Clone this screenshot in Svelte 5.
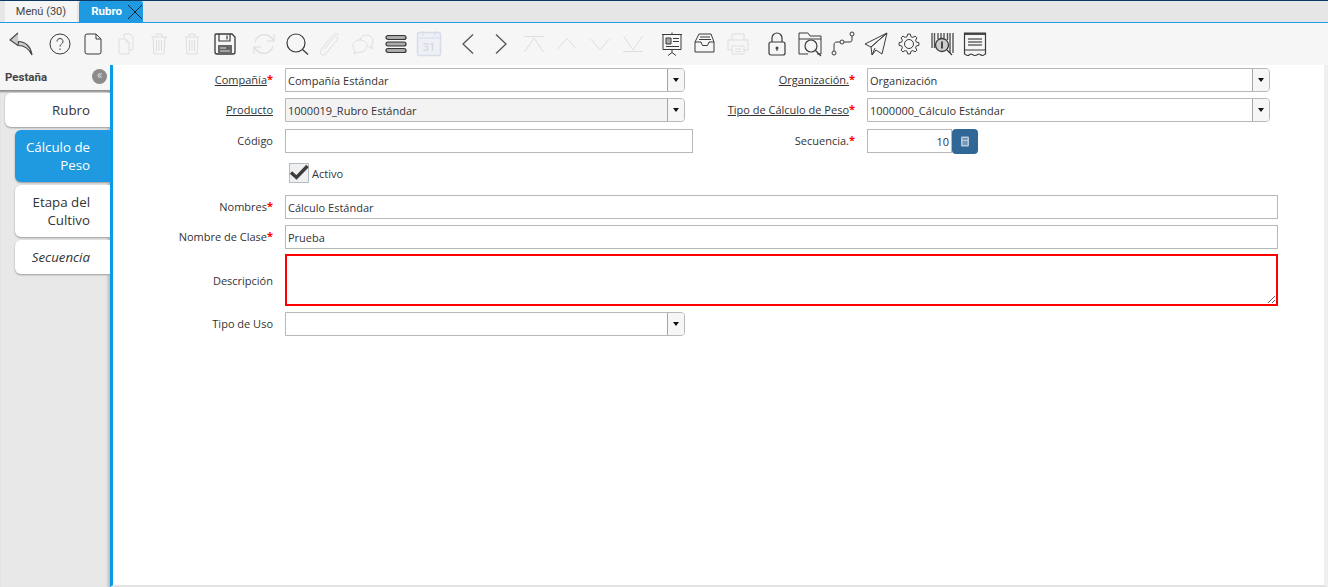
<script>
  let tabs = [
    { name: "Rubro", cls: "first" },
    { name: "Cálculo de Peso", cls: "active" },
    { name: "Etapa del Cultivo", cls: "" },
    { name: "Secuencia", cls: "ital" }
  ];

  // 8 tooth gear outline for the settings button
  function gearPath() {
    let d = "";
    for (let i = 0; i < 8; i++) {
      let a = (i * Math.PI) / 4;
      let pts = [[-0.26, 7.6], [-0.13, 10], [0.13, 10], [0.26, 7.6]];
      for (let [o, r] of pts) {
        let x = 15 + r * Math.cos(a + o);
        let y = 15 + r * Math.sin(a + o);
        d += (d ? "L" : "M") + x.toFixed(2) + " " + y.toFixed(2);
      }
    }
    return d + "z";
  }
</script>

<div class="page">
  <div class="tabstrip">
    <div class="wintab">Menú (30)</div>
    <div class="wintab current">
      Rubro
      <svg width="16" height="16" viewBox="0 0 16 16"><path d="M1 1l14 14M15 1L1 15" stroke="#123" stroke-width="1" fill="none"/></svg>
    </div>
  </div>

  <div class="toolbar">
    <div class="group">
      <button class="tool"><svg viewBox="0 0 30 30"><path d="M12 4L4 11l8 5.500.5-4C19.500 12.500 25 18 26 26c-3-6-7.500-9.500-13.500-9.500" fill="#ccc" stroke="#444" stroke-width="1.100"/></svg></button>
    </div>
    <div class="group">
      <button class="tool"><svg viewBox="0 0 30 30"><circle cx="15" cy="15" r="10"/><path d="M12 12.500c0-4 6-4 6 0 0 2.500-3 2.500-3 5M15 19.500v1.500"/></svg></button>
      <button class="tool"><svg viewBox="0 0 30 30"><path d="M9 5h9l5 5v13a2 2 0 0 1-2 2H9a2 2 0 0 1-2-2V7a2 2 0 0 1 2-2zM18 5v5h5"/></svg></button>
      <button class="tool off"><svg viewBox="0 0 30 30"><path d="M13 5h6l3 3v13h-4M13 5v4"/><path d="M9 10h6l3 3v12H9a1 1 0 0 1-1-1V11a1 1 0 0 1 1-1zM15 10v3h3"/></svg></button>
      <button class="tool off"><svg viewBox="0 0 30 30"><path d="M7 8h16M12 8V5h6v3M9 8l1 17h10l1-17M12.500 11v11M15 11v11M17.500 11v11"/></svg></button>
      <button class="tool off"><svg viewBox="0 0 30 30"><path d="M8 8h14M12 8V5h6v3M9 8l1 17h10l1-17M12.500 11v11M15 11v11M17.500 11v11"/></svg></button>
      <button class="tool"><svg viewBox="0 0 30 30"><path d="M6 5h16l3 3v15a2 2 0 0 1-2 2H7a2 2 0 0 1-2-2V6a1 1 0 0 1 1-1z" stroke-width="1.300"/><path d="M9 5v7h11V5M17 6.500v4" stroke-width="1.200"/><path d="M8 16h14v9H8z" fill="#666" stroke="none"/><path d="M10 19h6M10 22h10" stroke="#ddd"/></svg></button>
    </div>
    <div class="group">
      <button class="tool off"><svg viewBox="0 0 30 30"><path d="M6 13a9.500 9.500 0 0 1 16.500-4l2.500 3M25 5v7h-7M24 17a9.500 9.500 0 0 1-16.500 4L5 18M5 25v-7h7" stroke-width="1.200"/></svg></button>
      <button class="tool"><svg viewBox="0 0 30 30"><circle cx="14" cy="14" r="9" stroke-width="1.200"/><path d="M20.500 20.500L26 25.500" stroke-width="1.300"/></svg></button>
      <button class="tool off"><svg viewBox="0 0 30 30"><path d="M24 6c-2-2-4.500-2-6 0L6.500 20c-2 2.500-1.500 4.500 0 5.500s3.500.5 5-1.500L22 11c1-1.500 1-2.500 0-3.500s-2.500-.5-3.500 1L9.500 20"/></svg></button>
      <button class="tool off"><svg viewBox="0 0 30 30"><path d="M12 11c-4 0-7 2.700-7 6 0 1.700.7 3.200 2 4.200L6 25l4.500-2c.5.100 1 .200 1.500.200 4 0 7-2.800 7-6.200s-3-6-7-6z"/><path d="M12 11c.3-3 3.200-5 6.500-5 3.800 0 6.500 2.700 6.500 6 0 1.500-.5 2.800-1.500 3.800l1 3.700-4-1.700"/></svg></button>
      <button class="tool"><svg viewBox="0 0 30 30"><rect x="5" y="6.500" width="20" height="4" rx="2" fill="#aaa" stroke="#333" stroke-width="1.200"/><rect x="5" y="13" width="20" height="4" rx="2" fill="#aaa" stroke="#333" stroke-width="1.200"/><rect x="5" y="19.500" width="20" height="4" rx="2" fill="#aaa" stroke="#333" stroke-width="1.200"/></svg></button>
      <button class="tool cal"><svg viewBox="0 0 30 30"><rect x="3.500" y="3.500" width="23" height="23" rx="2" fill="#eef0f5" stroke="#d5dcea" stroke-width="1.500"/><path d="M4 9h22M9 2v5M21 2v5" stroke="#d5dcea"/><text x="15" y="22" text-anchor="middle" class="calnum">31</text></svg></button>
    </div>
    <div class="group">
      <button class="tool dim"><svg viewBox="0 0 30 30"><path d="M20 5.500L10 15l10 9.500" stroke-width="1.300"/></svg></button>
      <button class="tool dim"><svg viewBox="0 0 30 30"><path d="M10 5.500L20 15l-10 9.500" stroke-width="1.300"/></svg></button>
      <button class="tool off"><svg viewBox="0 0 30 30"><path d="M5 7.500h20M5.500 23L15 9l9.500 14"/></svg></button>
      <button class="tool off"><svg viewBox="0 0 30 30"><path d="M5.500 20L15 9.500 24.500 20"/></svg></button>
      <button class="tool off"><svg viewBox="0 0 30 30"><path d="M5.500 10L15 20.500 24.500 10"/></svg></button>
      <button class="tool off"><svg viewBox="0 0 30 30"><path d="M5 22.500h20M5.500 7L15 21l9.500-14"/></svg></button>
    </div>
    <div class="group">
      <button class="tool"><svg viewBox="0 0 30 30"><path d="M5 5.500h20M6 5.500v15h18v-15M15 3.500v2M15 20.500v3M15 23.500l-4 3M15 23.500l4 3"/><path d="M9 9h5v6H9z" fill="#aaa"/><path d="M16 9.500h6M16 12.500h6M9 17.500h13"/></svg></button>
      <button class="tool"><svg viewBox="0 0 30 30"><path d="M9 5h12l3 8v10H5V13zM5 13h6l1.500 3.500h5L19 13h5M10 8h10M9 10.500h12"/></svg></button>
      <button class="tool off"><svg viewBox="0 0 30 30"><path d="M9 11V5h12v6M9 21H5V11h20v10h-4M9 17h12v8H9zM12 20h6M12 22.500h6"/></svg></button>
    </div>
    <div class="group">
      <button class="tool"><svg viewBox="0 0 30 30"><path d="M10 13V9a5 5 0 0 1 10 0v4" stroke-width="1.200"/><rect x="7" y="13" width="16" height="13" rx="2" stroke-width="1.200"/><circle cx="15" cy="19" r="1.500" fill="#444" stroke="none"/><path d="M15 20v2"/></svg></button>
      <button class="tool"><svg viewBox="0 0 30 30"><path d="M4 10V4h9l2 3h11v18h-4M4 10v15h9M4 10h22"/><circle cx="16" cy="17" r="6" stroke-width="1.200"/><path d="M20.500 21.500L26 27" stroke-width="1.200"/></svg></button>
      <button class="tool"><svg viewBox="0 0 30 30"><circle cx="6" cy="24" r="2"/><circle cx="14" cy="13" r="2"/><circle cx="24" cy="5" r="2"/><path d="M6 22v-6c0-2 1-3 3-3h3M16 13h6c1.500 0 2-1 2-2V7"/></svg></button>
      <button class="tool"><svg viewBox="0 0 30 30"><path d="M26 4L4 15l6 3zM26 4L10 18l1 8 4-5 6 4zM11 26l3-7"/></svg></button>
      <button class="tool"><svg viewBox="0 0 30 30"><path d={gearPath()} stroke-linejoin="round"/><circle cx="15" cy="15" r="4.500"/></svg></button>
      <button class="tool"><svg viewBox="0 0 30 30"><path d="M5 4v15M7.500 4v15M11 4v6M14 4v5M17 4v5M20.500 4v7M23 4v20M26 4v20" stroke-width="1.400" stroke="#555"/><circle cx="15" cy="16" r="6.500" fill="#ccc" stroke-width="1.300"/><path d="M15 12.500v7" stroke-width="1.800"/><path d="M20 21l5 5" stroke-width="1.300"/></svg></button>
      <button class="tool"><svg viewBox="0 0 30 30"><path d="M4.500 4h21v21c-1 0-1.500 1.500-3 1.500S20 25 19 25s-2 1.500-4 1.500-3-1.500-4-1.500-2 1.500-3.500 1.500S5.500 25 4.500 25z" stroke-width="1.200"/><path d="M4.500 5h21" stroke-width="1.800"/><path d="M8 10h14M8 13h14M8 16h14" stroke-width="1.500" stroke="#666"/><path d="M4.500 21h21"/></svg></button>
    </div>
  </div>

  <div class="body">
    <aside class="side">
      <div class="sidehead">
        <span>Pestaña</span>
        <span class="collapse">«</span>
      </div>
      <div class="sidetabs">
        {#each tabs as t}
          <div class="stab {t.cls}">{t.name}</div>
        {/each}
      </div>
    </aside>

    <main class="main">
      <div class="form">
        <label class="lbl"><u>Compañía</u><b>*</b></label>
        <div class="combo"><input value="Compañía Estándar" readonly /><span class="drop"><i></i></span></div>
        <label class="lbl"><u>Organización.</u><b>*</b></label>
        <div class="combo right"><input value="Organización" readonly /><span class="drop"><i></i></span></div>

        <label class="lbl"><u>Producto</u></label>
        <div class="combo grey"><input value="1000019_Rubro Estándar" readonly /><span class="drop"><i></i></span></div>
        <label class="lbl"><u>Tipo de Cálculo de Peso</u><b>*</b></label>
        <div class="combo right"><input value="1000000_Cálculo Estándar" readonly /><span class="drop"><i></i></span></div>

        <label class="lbl">Código</label>
        <input class="field code" />
        <label class="lbl">Secuencia.<b>*</b></label>
        <div class="number">
          <input class="field num" value="10" readonly />
          <span class="calc"><svg width="10" height="11" viewBox="0 0 10 11"><rect x="1" y="0.500" width="8" height="10" rx="1" fill="#b9c9d8"/><path d="M2.500 3h5M2.500 6h5M2.500 8h5" stroke="#2f6797"/></svg></span>
        </div>

        <span></span>
        <div class="check wide">
          <span class="box"><svg width="20" height="20" viewBox="0 0 20 20"><path d="M2 9.500l5.500 5L18.500 3" fill="none" stroke="#3c3c3c" stroke-width="3.400"/></svg></span>
          <span>Activo</span>
        </div>

        <label class="lbl">Nombres<b>*</b></label>
        <input class="field wide" value="Cálculo Estándar" readonly />

        <label class="lbl">Nombre de Clase<b>*</b></label>
        <input class="field wide" value="Prueba" readonly />

        <label class="lbl mid">Descripción</label>
        <textarea class="desc wide"></textarea>

        <label class="lbl">Tipo de Uso</label>
        <div class="combo"><input value="" readonly /><span class="drop"><i></i></span></div>
      </div>
    </main>
  </div>
</div>

<style>
  :global(body) {
    margin: 0;
    background: #fff;
  }
  .page {
    width: 1328px;
    height: 587px;
    display: flex;
    flex-direction: column;
    overflow: hidden;
    font-family: "Open Sans", sans-serif;
    color: #333;
  }
  .tabstrip {
    height: 21px;
    background: #e6e6e6;
    border-top: 1px solid #0d3a63;
    border-bottom: 1px solid #1b9ce6;
    display: flex;
    padding-left: 5px;
    gap: 2px;
    flex: none;
  }
  .wintab {
    width: 72px;
    font: 11px/21px Roboto, sans-serif;
    color: #444;
    background: #f5f5f5;
    text-align: center;
  }
  .wintab.current {
    width: 64px;
    background: #1f9ae0;
    color: #fff;
    font: bold 11.500px/21px Roboto, sans-serif;
    display: flex;
    align-items: center;
    justify-content: flex-end;
    gap: 5px;
    border-radius: 2px 2px 0 0;
  }
  .toolbar {
    height: 42px;
    flex: none;
    background: #f6f6f6;
    display: flex;
    gap: 6px;
    padding-left: 4px;
  }
  .group {
    display: flex;
  }
  .tool {
    width: 33px;
    height: 42px;
    padding: 0;
    border: 0;
    background: none;
    display: flex;
    align-items: center;
    justify-content: center;
    color: #3a3a3a;
  }
  .tool.off {
    color: #dedede;
  }
  .tool.dim {
    color: #555;
  }
  .tool svg {
    width: 30px;
    height: 30px;
    fill: none;
    stroke: currentColor;
    stroke-width: 1;
  }
  .calnum {
    font: 11px Roboto, sans-serif;
    fill: #ccd3e0;
    stroke: none;
  }
  .body {
    flex: 1;
    display: flex;
    min-height: 0;
  }
  .side {
    width: 110px;
    flex: none;
    background: #e8e8e8;
    display: flex;
    flex-direction: column;
  }
  .sidehead {
    height: 25px;
    flex: none;
    box-sizing: border-box;
    padding: 0 3px 2px 5px;
    background: #f6f6f6;
    display: flex;
    justify-content: space-between;
    align-items: center;
    font: bold 11.500px Roboto, sans-serif;
    color: #444;
  }
  .collapse {
    width: 15px;
    height: 15px;
    border-radius: 50%;
    background: #8b8b8b;
    color: #ddd;
    font: 12px/13px Roboto, sans-serif;
    text-align: center;
  }
  .sidetabs {
    flex: 1;
    display: flex;
    flex-direction: column;
    gap: 3px;
    padding-top: 3px;
    box-shadow: inset 0 3px 2px -1px #8e8e8e, inset -4px 0 3px -2px #bbb;
  }
  .stab {
    margin-left: 15px;
    padding: 8px 20px 8px 5px;
    font-size: 13.300px;
    line-height: 18px;
    text-align: right;
    background: #fff;
    border-radius: 6px 0 0 6px;
    box-shadow: 0 1px 2px #9a9a9a;
  }
  .stab.first {
    margin-left: 5px;
  }
  .stab.active {
    background: #1f9ae0;
    color: #fff;
  }
  .stab.ital {
    font-style: italic;
  }
  .main {
    flex: 1;
    background: #fff;
    border-left: 3px solid #099ce6;
    border-right: 4px solid #efefef;
    border-bottom: 2px solid #e3e3e3;
  }
  .form {
    display: grid;
    grid-template-columns: 172px 408px 174px 411px;
    grid-template-rows: 30px 31px 34px 32px 30px 29px 58px 24px;
    align-items: start;
    padding-top: 3px;
    font-size: 11px;
  }
  .lbl {
    padding-right: 12px;
    text-align: right;
    line-height: 24px;
    color: #333;
  }
  .lbl.mid {
    line-height: 54px;
  }
  .lbl b {
    color: #f00;
    font-weight: 700;
    font-size: 11px;
    line-height: 10px;
    vertical-align: 1px;
  }
  input {
    font: inherit;
    color: #333;
    outline: none;
    box-sizing: border-box;
  }
  .field {
    height: 24px;
    border: 1px solid #b8b8b8;
    padding: 0 2px;
    background: #fff;
  }
  .code {
    width: 408px;
  }
  .wide {
    grid-column: 2 / 5;
    width: 993px;
  }
  .combo {
    width: 400px;
    height: 24px;
    display: flex;
    box-sizing: border-box;
    border: 1px solid #b8b8b8;
    border-radius: 0 4px 4px 0;
    overflow: hidden;
  }
  .combo.right {
    width: 403px;
  }
  .combo input {
    flex: 1;
    min-width: 0;
    border: 0;
    padding: 0 2px;
    background: transparent;
  }
  .combo.grey {
    background: #f3f3f3;
  }
  .drop {
    width: 16px;
    border-left: 1px solid #a5a5a5;
    background: #f6f6f6;
    display: flex;
    align-items: center;
    justify-content: center;
  }
  .drop i {
    border: 3.500px solid transparent;
    border-top: 4px solid #111;
    border-bottom: 0;
  }
  .number {
    display: flex;
  }
  .num {
    width: 85px;
    text-align: right;
  }
  .calc {
    width: 26px;
    height: 25px;
    background: #2f6797;
    border-radius: 4px;
    display: flex;
    align-items: center;
    justify-content: center;
  }
  .check {
    display: flex;
    align-items: center;
    gap: 3px;
    padding-left: 4px;
    height: 20px;
  }
  .box {
    width: 20px;
    height: 20px;
    box-sizing: border-box;
    border: 1px solid #b5bcc4;
    background: #eef0f2;
    display: flex;
  }
  .box svg {
    flex: none;
    margin: -1px;
  }
  .desc {
    height: 52px;
    box-sizing: border-box;
    border: 2px solid #f00;
    outline: none;
    margin: 0;
    display: block;
  }
</style>
